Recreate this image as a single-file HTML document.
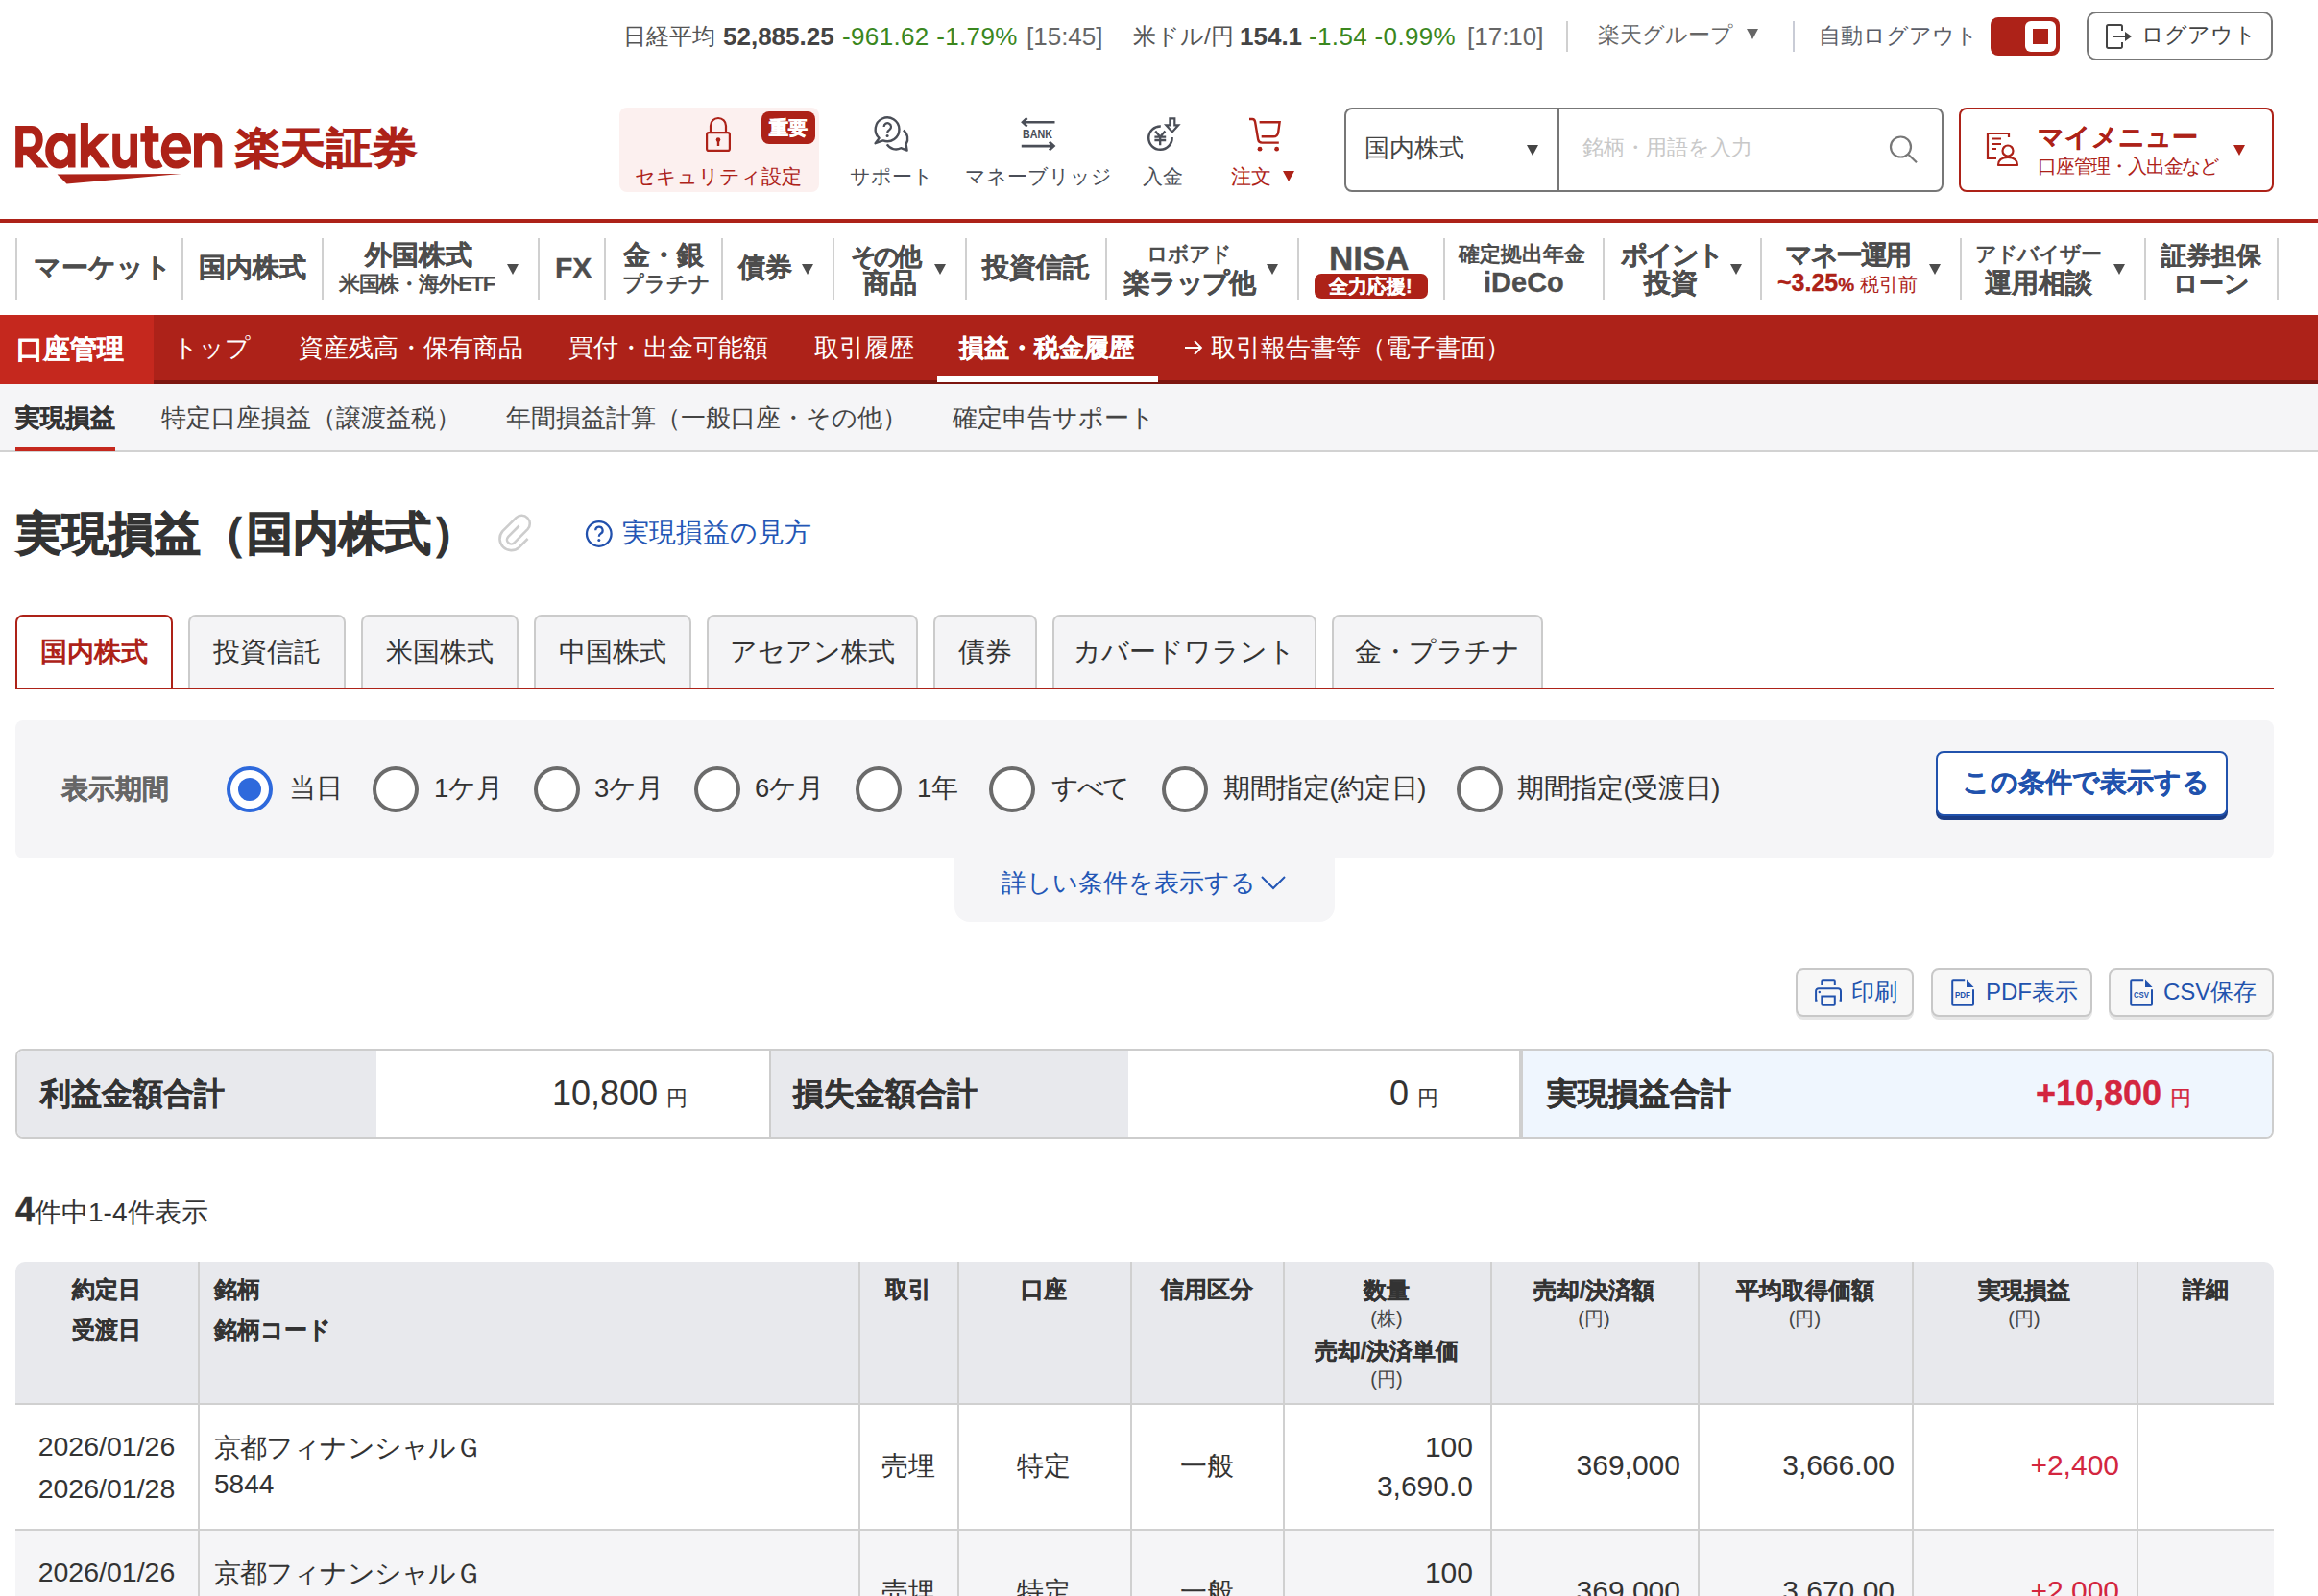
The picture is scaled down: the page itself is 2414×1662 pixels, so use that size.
<!DOCTYPE html>
<html lang="ja">
<head>
<meta charset="utf-8">
<style>
*{box-sizing:border-box;margin:0;padding:0}
html,body{width:2414px;height:1662px;overflow:hidden;background:#fff}
body{position:relative;font-family:"Liberation Sans",sans-serif;color:#333}
.a{position:absolute;white-space:nowrap}
.b{font-weight:bold}
svg{position:absolute;overflow:visible}
/* top bar */
.tb{font-size:26px;line-height:26px;color:#555}
.tb.v{font-weight:bold;color:#444}
.tb.g{color:#3a871e;letter-spacing:0.35px}
.tb.j{font-size:24px;line-height:24px}
.vsep{position:absolute;width:2px;background:#d0d0d0}
/* header */
.hlab{font-size:21px;line-height:22px;color:#4a4e57}
/* nav */
.nv{font-weight:bold;color:#4d4d4d;text-align:center}
.nsep{position:absolute;top:248px;height:64px;width:2px;background:#d0d0d0}
.tri{position:absolute;width:0;height:0;border-left:6px solid transparent;border-right:6px solid transparent;border-top:11px solid #4d4d4d}

.acc{top:348px;font-size:26px;line-height:28px;color:#fff}
.sub{top:421px;font-size:26px;line-height:28px;color:#444}
.tab{top:640px;height:76px;border:2px solid #cbcbcb;border-bottom:none;border-radius:8px 8px 0 0;background:#f4f4f6;font-size:28px;line-height:74px;text-align:center;color:#333}
.tab.act{border-color:#ad2218;background:#fff;color:#ad2218;font-weight:bold}

.rad{position:absolute;top:798px;width:48px;height:48px;border-radius:50%;border:4px solid #6b6b6b;background:#fff}
.rad.on{border-color:#2e69dc}
.rad.on::after{content:"";position:absolute;left:8px;top:8px;width:24px;height:24px;border-radius:50%;background:#2e69dc}
.rl{top:807px;font-size:27.5px;line-height:28px;color:#333}
.btn{top:1008px;height:51px;border:2px solid #c8c8c8;border-radius:8px;background:#f7f7f7;box-shadow:0 3px 0 #e6e6e6}
.bt{top:1020px;font-size:24px;line-height:26px;color:#2152ad}
.sl{top:1123px;font-size:32px;line-height:32px;color:#333}
.sv{top:1121px;font-size:36px;line-height:36px;color:#333}
.yen{font-size:22px;margin-left:9px}

.th{font-size:24px;line-height:34px;font-weight:bold;color:#333}
.un{font-size:20px;line-height:26px;color:#444}
.td{font-size:28px;line-height:34px;color:#333}
.dt{font-size:28.5px}
.num{font-size:30px}

.b,.nv,.th,b{-webkit-text-stroke:0.35px currentColor}
.ttl{-webkit-text-stroke:1.2px currentColor}
</style>
</head>
<body>

<!-- ================= TOP BAR ================= -->
<div class="a tb j" style="left:649px;top:26px">日経平均</div>
<div class="a tb v" style="left:753px;top:25px">52,885.25</div>
<div class="a tb g" style="left:877px;top:25px">-961.62 -1.79%</div>
<div class="a tb" style="left:1069px;top:25px;color:#666">[15:45]</div>
<div class="a tb j" style="left:1180px;top:26px">米ドル/円</div>
<div class="a tb v" style="left:1291px;top:25px">154.1</div>
<div class="a tb g" style="left:1363px;top:25px">-1.54 -0.99%</div>
<div class="a tb" style="left:1528px;top:25px;color:#666">[17:10]</div>
<div class="vsep" style="left:1631px;top:22px;height:32px"></div>
<div class="a tb" style="left:1664px;top:25px;font-size:22.5px;line-height:24px;color:#666">楽天グループ</div>
<div class="tri" style="left:1819px;top:30px;border-top-color:#666"></div>
<div class="vsep" style="left:1867px;top:22px;height:32px;background:#c9ccd6"></div>
<div class="a tb" style="left:1894px;top:26px;font-size:22.5px;line-height:24px;color:#5a5d68">自動ログアウト</div>
<div class="a" style="left:2073px;top:18px;width:72px;height:40px;border-radius:8px;background:#ad2218"></div>
<div class="a" style="left:2109px;top:22px;width:32px;height:32px;border-radius:6px;background:#fff"></div>
<div class="a" style="left:2117px;top:30px;width:16px;height:16px;background:#ad2218"></div>
<div class="a" style="left:2173px;top:12px;width:194px;height:51px;border:2px solid #777;border-radius:10px"></div>
<svg style="left:2193px;top:25px" width="28" height="26" viewBox="0 0 28 26"><path d="M17 7V2.5a1.5 1.5 0 0 0-1.5-1.5H2.5A1.5 1.5 0 0 0 1 2.5v21A1.5 1.5 0 0 0 2.5 25h13a1.5 1.5 0 0 0 1.5-1.5V19" fill="none" stroke="#444" stroke-width="2"/><path d="M8 13h13" stroke="#444" stroke-width="2"/><path d="M20 8l7 5-7 5z" fill="#444"/></svg>
<div class="a tb" style="left:2230px;top:25px;font-size:22.5px;line-height:24px;color:#444">ログアウト</div>

<!-- ================= HEADER ================= -->
<!-- logo -->
<svg style="left:0;top:100px" width="460" height="110" viewBox="0 100 460 110">
  <g fill="#ad2218" fill-rule="evenodd">
    <path d="M16.15 130.9H33C40 130.9 44.7 136.5 44.7 145.5C44.7 152 41.8 157 37.5 159.5L50.7 174.6H38.8L27.6 161.2H24.1V174.6H16.15ZM24.1 139.3H31.8C35 139.3 36.8 141.8 36.8 146C36.8 150.2 35 152.7 31.8 152.7H24.1Z"/>
    <path d="M78.5 139.8V174.6H71V171.5C68.8 174 66 175.6 62 175.6C53 175.6 47.2 167.5 47.2 157C47.2 146.5 53 138.4 62 138.4C66 138.4 68.8 140 71 142.5V139.8ZM63.3 146.8A7.7 10.2 0 1 0 63.3 167.2A7.7 10.2 0 1 0 63.3 146.8Z"/>
    <path d="M83.9 127.9H91.9V174.6H83.9ZM91.9 150.5L103 139.8H113.5L99.5 153.5L115 174.6H104.5L94.5 161L91.9 163.5Z"/>
    <path d="M117.2 139.8H125.1V160C125.1 164.5 127.3 167.1 130.3 167.1C133.3 167.1 135.5 164.5 135.5 160V139.8H143V174.6H135.5V172C133.5 174.5 131 175.6 128.5 175.6C121.5 175.6 117.2 170 117.2 162Z"/>
    <path d="M150.9 130.9H158.8V139.3H165.3V147.8H158.8V163.5C158.8 166.5 160.3 167.5 163 167.5L166 166.8L169.5 173.2C167 175 164.5 175.6 161.5 175.6C154.5 175.6 150.9 171.5 150.9 164.5V147.8H146.4V139.3H150.9Z"/>
    <path d="M199 159.7H175.9C177 164.5 180 167.3 183.5 167.3C186.5 167.3 189.5 165.8 191.6 163.8L198 168.6C194.8 173 189.5 175.6 183.5 175.6C174.5 175.6 167.8 167.8 167.8 157C167.8 146.2 174.5 138.4 183.5 138.4C192.5 138.4 199 146 199 156.5ZM175.8 153.2H190.6C189.8 149 187 146.3 183.2 146.3C179.4 146.3 176.6 149 175.8 153.2Z"/>
    <path d="M202 139.3H210V142.5C212 140 215 138.4 218.5 138.4C226 138.4 231.3 143.5 231.3 151.5V174.6H223.3V153C223.3 149 221 146.8 217.5 146.8C213 146.8 210 149.5 210 154V174.6H202Z"/>
  </g>
  <path d="M59.6 181.5L188.6 181L69.5 191.4Z" fill="#ad2218"/>
  <text x="245" y="169" font-size="44" fill="#ad2218" stroke="#ad2218" stroke-width="2.5" stroke-linejoin="miter" textLength="189" lengthAdjust="spacingAndGlyphs">楽天証券</text>
</svg>

<!-- security -->
<div class="a" style="left:645px;top:112px;width:208px;height:88px;border-radius:8px;background:#fcf0ef"></div>
<svg style="left:735px;top:122px" width="26" height="36" viewBox="0 0 26 36"><path d="M5 15V9a8 8 0 0 1 16 0v6" fill="none" stroke="#ad2218" stroke-width="2.2"/><rect x="1.1" y="16.1" width="23.8" height="18.8" rx="2" fill="none" stroke="#ad2218" stroke-width="2.2"/><circle cx="13" cy="23.5" r="2.3" fill="#ad2218"/><rect x="11.8" y="24" width="2.4" height="6" fill="#ad2218"/></svg>
<div class="a" style="left:793px;top:116px;width:56px;height:34px;border-radius:8px;background:#ad2218"></div>
<div class="a b" style="left:801px;top:123px;font-size:20px;line-height:20px;color:#fff;-webkit-text-stroke:0.6px #fff">重要</div>
<div class="a hlab" style="left:661px;top:173px;color:#ad2218">セキュリティ設定</div>

<!-- support -->
<svg style="left:900px;top:115px" width="60" height="50" viewBox="900 115 60 50"><path d="M915.6 143.9L911.6 149.2L919.6 146.4A12.4 12.4 0 1 0 915.6 143.9Z" fill="none" stroke="#4a4e57" stroke-width="2.4" stroke-linejoin="round"/><path d="M940.8 135.6A11 11 0 0 1 943.6 150.2L944.6 156.6L938.2 154.2A11 11 0 0 1 923.8 150.4" fill="none" stroke="#4a4e57" stroke-width="2.4" stroke-linejoin="round"/><path d="M920.6 132a3.7 3.7 0 1 1 5.8 3c-1.6 1-2.3 1.8-2.3 3.4" fill="none" stroke="#4a4e57" stroke-width="2.2"/><circle cx="924.1" cy="141.6" r="1.5" fill="#4a4e57"/></svg>
<div class="a hlab" style="left:885px;top:173px">サポート</div>

<!-- money bridge -->
<svg style="left:1055px;top:115px" width="50" height="50" viewBox="1055 115 50 50"><path d="M1098.5 127.3H1065M1069.6 123L1065 127.3L1069.6 131.6" fill="none" stroke="#4a4e57" stroke-width="2.6"/><path d="M1063.8 152.1H1097.5M1092.8 147.8L1097.5 152.1L1092.8 156.4" fill="none" stroke="#4a4e57" stroke-width="2.6"/><text x="1080.5" y="144.4" text-anchor="middle" font-family="Liberation Sans" font-weight="bold" font-size="12" textLength="31" lengthAdjust="spacingAndGlyphs" fill="#4a4e57">BANK</text></svg>
<div class="a hlab" style="left:1005px;top:173px">マネーブリッジ</div>

<!-- deposit -->
<svg style="left:1185px;top:112px" width="50" height="50" viewBox="1185 112 50 50"><path d="M1208.8 131.4A12.2 12.2 0 1 0 1220.6 143" fill="none" stroke="#4a4e57" stroke-width="2.5"/><path d="M1203.2 136.4L1208.2 142.4L1213.4 136.4M1208.2 142V151.2M1202.4 142.6H1214.2M1202.4 146H1214.2" fill="none" stroke="#4a4e57" stroke-width="2.3"/><path d="M1218.4 123.4H1223.3V130.3H1227.2L1220.8 137.4L1214.4 130.3H1218.4Z" fill="none" stroke="#4a4e57" stroke-width="2.2"/></svg>
<div class="a hlab" style="left:1190px;top:173px">入金</div>

<!-- order -->
<svg style="left:1295px;top:112px" width="50" height="50" viewBox="1295 112 50 50"><path d="M1301 124H1304.2Q1306.6 124 1307.1 127L1310.2 145.2Q1310.8 148.6 1314.2 148.6H1331.8" fill="none" stroke="#ad2218" stroke-width="2.4"/><path d="M1311.6 127.3H1332.6L1331.2 137.6Q1330.6 142.3 1326 142.3H1313.7" fill="none" stroke="#ad2218" stroke-width="2.4"/><circle cx="1312" cy="155.2" r="2.4" fill="#ad2218"/><circle cx="1329.6" cy="155.2" r="2.4" fill="#ad2218"/></svg>
<div class="a hlab" style="left:1282px;top:173px;color:#ad2218">注文</div>
<div class="tri" style="left:1336px;top:178px;border-top-color:#ad2218"></div>

<!-- search -->
<div class="a" style="left:1400px;top:112px;width:624px;height:88px;border:2px solid #777;border-radius:8px"></div>
<div class="a" style="left:1622px;top:113px;width:2px;height:86px;background:#777"></div>
<div class="a" style="left:1421px;top:141px;font-size:26px;line-height:26px;color:#444">国内株式</div>
<div class="tri" style="left:1590px;top:151px;border-top-color:#444"></div>
<div class="a" style="left:1648px;top:141px;font-size:22px;line-height:26px;color:#c8c8c8">銘柄・用語を入力</div>
<svg style="left:1967px;top:141px" width="32" height="30" viewBox="0 0 32 30"><circle cx="12.5" cy="12" r="10.5" fill="none" stroke="#777" stroke-width="2.2"/><path d="M20.5 20l8.5 8.3" stroke="#777" stroke-width="2.2"/></svg>

<!-- mymenu -->
<div class="a" style="left:2040px;top:112px;width:328px;height:88px;border:2px solid #ad2218;border-radius:8px"></div>
<svg style="left:2068px;top:138px" width="36" height="36" viewBox="0 0 36 36"><path d="M11 27H2V1h22v4" fill="none" stroke="#ad2218" stroke-width="2.2"/><path d="M6 6.5h10M6 12h10M6 17h5" stroke="#ad2218" stroke-width="2.2"/><circle cx="23" cy="19" r="5.5" fill="none" stroke="#ad2218" stroke-width="2.2"/><path d="M13 34c0-5 3.5-8 10-8s10 3 10 8z" fill="none" stroke="#ad2218" stroke-width="2.2" stroke-linejoin="round"/></svg>
<div class="a b" style="left:2122px;top:129px;font-size:26.5px;line-height:28px;color:#ad2218">マイメニュー</div>
<div class="a" style="left:2122px;top:163px;font-size:20px;line-height:20px;letter-spacing:-1.2px;color:#ad2218">口座管理・入出金など</div>
<div class="tri" style="left:2326px;top:151px;border-top-color:#ad2218"></div>

<!-- red line -->
<div class="a" style="left:0;top:228px;width:2414px;height:4px;background:#ad2218"></div>

<!-- ================= NAV ================= -->
<div class="nsep" style="left:16px"></div>
<div class="nsep" style="left:189px"></div>
<div class="nsep" style="left:335px"></div>
<div class="nsep" style="left:560px"></div>
<div class="nsep" style="left:629px"></div>
<div class="nsep" style="left:751px"></div>
<div class="nsep" style="left:867px"></div>
<div class="nsep" style="left:1005px"></div>
<div class="nsep" style="left:1151px"></div>
<div class="nsep" style="left:1351px"></div>
<div class="nsep" style="left:1503px"></div>
<div class="nsep" style="left:1669px"></div>
<div class="nsep" style="left:1833px"></div>
<div class="nsep" style="left:2041px"></div>
<div class="nsep" style="left:2233px"></div>
<div class="nsep" style="left:2371px"></div>

<div class="a nv" style="left:35px;top:265px;font-size:28px;line-height:28px">マーケット</div>
<div class="a nv" style="left:207px;top:265px;font-size:28px;line-height:28px">国内株式</div>
<div class="a nv" style="left:380px;top:252px;font-size:28px;line-height:28px">外国株式</div>
<div class="a nv" style="left:353px;top:285px;font-size:22px;line-height:22px;letter-spacing:-1.3px;-webkit-text-stroke:0">米国株・海外ETF</div>
<div class="tri" style="left:528px;top:275px"></div>
<div class="a nv" style="left:578px;top:264px;font-size:30px;line-height:30px">FX</div>
<div class="a nv" style="left:649px;top:252px;font-size:28px;line-height:28px">金・銀</div>
<div class="a nv" style="left:648px;top:285px;font-size:22px;line-height:22px;-webkit-text-stroke:0">プラチナ</div>
<div class="a nv" style="left:769px;top:265px;font-size:28px;line-height:28px">債券</div>
<div class="tri" style="left:835px;top:275px"></div>
<div class="a nv" style="left:886px;top:253px;font-size:26px;line-height:28px;letter-spacing:-3px">その他</div>
<div class="a nv" style="left:899px;top:281px;font-size:28px;line-height:28px">商品</div>
<div class="tri" style="left:973px;top:275px"></div>
<div class="a nv" style="left:1023px;top:265px;font-size:28px;line-height:28px">投資信託</div>
<div class="a nv" style="left:1194px;top:254px;font-size:22px;line-height:22px;letter-spacing:-1px;-webkit-text-stroke:0">ロボアド</div>
<div class="a nv" style="left:1170px;top:281px;font-size:28px;line-height:28px;letter-spacing:-1.2px">楽ラップ他</div>
<div class="tri" style="left:1319px;top:275px"></div>
<div class="a nv" style="left:1384px;top:251px;font-size:35px;line-height:35px">NISA</div>
<div class="a" style="left:1369px;top:285px;width:118px;height:26px;border-radius:7px;background:#ad2218"></div>
<div class="a b" style="left:1384px;top:287px;font-size:20px;line-height:22px;color:#fff">全力応援!</div>
<div class="a nv" style="left:1519px;top:254px;font-size:22px;line-height:22px;-webkit-text-stroke:0">確定拠出年金</div>
<div class="a nv" style="left:1545px;top:280px;font-size:29px;line-height:29px">iDeCo</div>
<div class="a nv" style="left:1688px;top:252px;font-size:28px;line-height:28px;letter-spacing:-2.7px">ポイント</div>
<div class="a nv" style="left:1712px;top:281px;font-size:28px;line-height:28px">投資</div>
<div class="tri" style="left:1802px;top:275px"></div>
<div class="a nv" style="left:1859px;top:252px;font-size:28px;line-height:28px;letter-spacing:-2.5px">マネー運用</div>
<div class="a" style="left:1851px;top:283px;font-size:20px;line-height:22px;color:#ad2218"><b style="font-size:25px">~3.25</b><b style="font-size:19px">%</b> 税引前</div>
<div class="tri" style="left:2009px;top:275px"></div>
<div class="a nv" style="left:2057px;top:254px;font-size:22px;line-height:22px;letter-spacing:-1px;-webkit-text-stroke:0">アドバイザー</div>
<div class="a nv" style="left:2067px;top:281px;font-size:28px;line-height:28px">運用相談</div>
<div class="tri" style="left:2201px;top:275px"></div>
<div class="a nv" style="left:2251px;top:252px;font-size:26px;line-height:28px">証券担保</div>
<div class="a nv" style="left:2263px;top:281px;font-size:26px;line-height:28px">ローン</div>


<!-- ================= ACCOUNT BAR ================= -->
<div class="a" style="left:0;top:328px;width:2414px;height:72px;background:#ad2219;border-bottom:4px solid #7d1610"></div>
<div class="a" style="left:0;top:328px;width:160px;height:72px;background:#c5281e"></div>
<div class="a b" style="left:17px;top:350px;font-size:28px;line-height:28px;color:#fff">口座管理</div>
<div class="a acc" style="left:180px">トップ</div>
<div class="a acc" style="left:311px">資産残高・保有商品</div>
<div class="a acc" style="left:592px">買付・出金可能額</div>
<div class="a acc" style="left:848px">取引履歴</div>
<div class="a acc b" style="left:999px">損益・税金履歴</div>
<div class="a" style="left:976px;top:392px;width:230px;height:6px;background:#fff"></div>
<svg style="left:1233px;top:352px" width="20" height="20" viewBox="0 0 20 20"><path d="M1 10h17M11 3l7 7-7 7" fill="none" stroke="#fff" stroke-width="1.8"/></svg>
<div class="a acc" style="left:1261px">取引報告書等（電子書面）</div>

<!-- ================= SUB NAV ================= -->
<div class="a" style="left:0;top:400px;width:2414px;height:71px;background:#f5f5f7;border-bottom:2px solid #d2d2d2"></div>
<div class="a b sub" style="left:16px;color:#333">実現損益</div>
<div class="a" style="left:16px;top:466px;width:104px;height:4px;background:#c5281e"></div>
<div class="a sub" style="left:168px">特定口座損益（譲渡益税）</div>
<div class="a sub" style="left:527px">年間損益計算（一般口座・その他）</div>
<div class="a sub" style="left:992px">確定申告サポート</div>

<!-- ================= TITLE ================= -->
<div class="a b ttl" style="left:17px;top:532px;font-size:48px;line-height:48px;color:#333">実現損益（国内株式）</div>
<svg style="left:510px;top:530px" width="50" height="50" viewBox="510 530 50 50"><path d="M540.6 547.5L529.3 558.8A4.5 4.5 0 0 0 535.7 565.2L549.5 551.1A8.49 8.49 0 0 0 537.5 539.1L523.4 553.2A12.05 12.05 0 0 0 540.4 570.2L549.6 561" fill="none" stroke="#cdcdcd" stroke-width="2.6"/></svg>
<svg style="left:605px;top:538px" width="40" height="40" viewBox="605 538 40 40"><circle cx="623.8" cy="556" r="12.8" fill="none" stroke="#2251ad" stroke-width="2.3"/><path d="M620.2 552.3A3.7 3.7 0 1 1 625.5 555.7C624.3 556.4 623.8 557.2 623.8 558.8" fill="none" stroke="#2251ad" stroke-width="2.2"/><circle cx="623.8" cy="562.6" r="1.5" fill="#2251ad"/></svg>
<div class="a" style="left:648px;top:541px;font-size:28px;line-height:28px;color:#2356b5">実現損益の見方</div>

<!-- ================= TABS ================= -->
<div class="a tab act" style="left:16px;width:164px">国内株式</div>
<div class="a tab" style="left:196px;width:164px">投資信託</div>
<div class="a tab" style="left:376px;width:164px">米国株式</div>
<div class="a tab" style="left:556px;width:164px">中国株式</div>
<div class="a tab" style="left:736px;width:220px">アセアン株式</div>
<div class="a tab" style="left:972px;width:108px">債券</div>
<div class="a tab" style="left:1096px;width:275px">カバードワラント</div>
<div class="a tab" style="left:1387px;width:220px">金・プラチナ</div>
<div class="a" style="left:16px;top:716px;width:2352px;height:2px;background:#ad2218"></div>


<!-- ================= FILTER ================= -->
<div class="a" style="left:16px;top:750px;width:2352px;height:144px;border-radius:8px;background:#f5f5f7"></div>
<div class="a b" style="left:64px;top:808px;font-size:28px;line-height:28px;color:#666">表示期間</div>
<div class="rad on" style="left:236px"></div>
<div class="a rl" style="left:301px">当日</div>
<div class="rad" style="left:388px"></div>
<div class="a rl" style="left:452px">1ケ月</div>
<div class="rad" style="left:556px"></div>
<div class="a rl" style="left:619px">3ケ月</div>
<div class="rad" style="left:723px"></div>
<div class="a rl" style="left:786px">6ケ月</div>
<div class="rad" style="left:891px"></div>
<div class="a rl" style="left:955px">1年</div>
<div class="rad" style="left:1030px"></div>
<div class="a rl" style="left:1095px;letter-spacing:-2.5px">すべて</div>
<div class="rad" style="left:1210px"></div>
<div class="a rl" style="left:1274px;letter-spacing:-0.35px">期間指定(約定日)</div>
<div class="rad" style="left:1517px"></div>
<div class="a rl" style="left:1580px;letter-spacing:-0.35px">期間指定(受渡日)</div>
<div class="a" style="left:2016px;top:782px;width:304px;height:68px;border:2px solid #2152ad;border-radius:8px;background:#fff;box-shadow:0 4px 0 #1a3c87"></div>
<div class="a b" style="left:2044px;top:801px;font-size:28px;line-height:28px;color:#2152ad">この条件で表示する</div>
<div class="a" style="left:994px;top:893px;width:396px;height:67px;border-radius:0 0 16px 16px;background:#f5f5f7"></div>
<div class="a" style="left:1043px;top:905px;font-size:26px;line-height:28px;color:#2356b5">詳しい条件を表示する</div>
<svg style="left:1313px;top:912px" width="26" height="15" viewBox="0 0 26 15"><path d="M1 1l12 12L25 1" fill="none" stroke="#2356b5" stroke-width="2"/></svg>

<!-- ================= BUTTONS ================= -->
<div class="a btn" style="left:1870px;width:123px"></div>
<svg style="left:1885px;top:1015px" width="40" height="40" viewBox="1885 1015 40 40"><path d="M1897.3 1026V1022.2a1 1 0 0 1 1-1H1909.8a1 1 0 0 1 1 1V1026" fill="none" stroke="#2152ad" stroke-width="2"/><path d="M1892.5 1041.7H1891.1V1032a2.8 2.8 0 0 1 2.8-2.8H1914.2a2.8 2.8 0 0 1 2.8 2.8V1041.7H1915.6" fill="none" stroke="#2152ad" stroke-width="2"/><path d="M1897.3 1037.5H1910.8V1045.7a1 1 0 0 1-1 1H1898.3a1 1 0 0 1-1-1Z" fill="none" stroke="#2152ad" stroke-width="2"/><circle cx="1894.8" cy="1033" r="1.2" fill="#2152ad"/></svg>
<div class="a bt" style="left:1928px">印刷</div>
<div class="a btn" style="left:2011px;width:168px"></div>
<svg style="left:2028px;top:1015px" width="32" height="36" viewBox="2028 1015 32 36"><path d="M2046.2 1021.2H2034.2a1 1 0 0 0-1 1V1045.7a1 1 0 0 0 1 1H2054a1 1 0 0 0 1-1V1030.3" fill="none" stroke="#2152ad" stroke-width="2"/><path d="M2048 1020.4V1027.9H2055.6Z" fill="#2152ad"/><text x="2044" y="1038.8" text-anchor="middle" font-family="Liberation Sans" font-weight="bold" font-size="8.6" textLength="16" lengthAdjust="spacingAndGlyphs" fill="#2152ad">PDF</text></svg>
<div class="a bt" style="left:2068px">PDF表示</div>
<div class="a btn" style="left:2196px;width:172px"></div>
<svg style="left:2214px;top:1015px" width="32" height="36" viewBox="2028 1015 32 36"><path d="M2046.2 1021.2H2034.2a1 1 0 0 0-1 1V1045.7a1 1 0 0 0 1 1H2054a1 1 0 0 0 1-1V1030.3" fill="none" stroke="#2152ad" stroke-width="2"/><path d="M2048 1020.4V1027.9H2055.6Z" fill="#2152ad"/><text x="2044" y="1038.8" text-anchor="middle" font-family="Liberation Sans" font-weight="bold" font-size="8.6" textLength="16" lengthAdjust="spacingAndGlyphs" fill="#2152ad">CSV</text></svg>
<div class="a bt" style="left:2253px">CSV保存</div>

<!-- ================= SUMMARY ================= -->
<div class="a" style="left:16px;top:1092px;width:2352px;height:94px;border:2px solid #cdcdcd;border-radius:8px;overflow:hidden;background:#fff">
  <div class="a" style="left:0;top:0;width:374px;height:90px;background:#e8e9ed"></div>
  <div class="a" style="left:783px;top:0;width:2px;height:90px;background:#cdcdcd"></div>
  <div class="a" style="left:785px;top:0;width:372px;height:90px;background:#e8e9ed"></div>
  <div class="a" style="left:1564px;top:0;width:4px;height:90px;background:#cfcfcf"></div>
  <div class="a" style="left:1568px;top:0;width:800px;height:90px;background:#eff6fe"></div>
</div>
<div class="a b sl" style="left:42px">利益金額合計</div>
<div class="a sv" style="left:575px">10,800<span class="yen">円</span></div>
<div class="a b sl" style="left:826px">損失金額合計</div>
<div class="a sv" style="left:1447px">0<span class="yen">円</span></div>
<div class="a b sl" style="left:1611px">実現損益合計</div>
<div class="a sv b" style="left:2120px;color:#d3263f">+10,800<span class="yen" style="font-weight:normal;color:#d3263f">円</span></div>

<div class="a" style="left:16px;top:1243px;font-size:28px;line-height:34px;color:#333"><b style="font-size:36px">4</b>件中1-4件表示</div>


<!-- ================= TABLE ================= -->
<div class="a" style="left:16px;top:1314px;width:2352px;height:148px;background:#e8e9ed;border-radius:10px 10px 0 0"></div>
<div class="a" style="left:16px;top:1463px;width:2352px;height:129px;background:#fff"></div>
<div class="a" style="left:16px;top:1594px;width:2352px;height:100px;background:#f5f5f7"></div>
<div class="a" style="left:16px;top:1461px;width:2352px;height:2px;background:#d0d0d0"></div>
<div class="a" style="left:16px;top:1592px;width:2352px;height:2px;background:#d0d0d0"></div>
<div class="a" style="left:206px;top:1314px;width:2px;height:400px;background:#d0d0d0"></div>
<div class="a" style="left:894px;top:1314px;width:2px;height:400px;background:#d0d0d0"></div>
<div class="a" style="left:997px;top:1314px;width:2px;height:400px;background:#d0d0d0"></div>
<div class="a" style="left:1177px;top:1314px;width:2px;height:400px;background:#d0d0d0"></div>
<div class="a" style="left:1336px;top:1314px;width:2px;height:400px;background:#d0d0d0"></div>
<div class="a" style="left:1552px;top:1314px;width:2px;height:400px;background:#d0d0d0"></div>
<div class="a" style="left:1768px;top:1314px;width:2px;height:400px;background:#d0d0d0"></div>
<div class="a" style="left:1991px;top:1314px;width:2px;height:400px;background:#d0d0d0"></div>
<div class="a" style="left:2225px;top:1314px;width:2px;height:400px;background:#d0d0d0"></div>
<div class="a th" style="left:16px;top:1326px;width:190px;text-align:center">約定日</div>
<div class="a th" style="left:16px;top:1368px;width:190px;text-align:center">受渡日</div>
<div class="a th" style="left:223px;top:1326px">銘柄</div>
<div class="a th" style="left:223px;top:1368px">銘柄コード</div>
<div class="a th" style="left:894px;top:1326px;width:103px;text-align:center">取引</div>
<div class="a th" style="left:997px;top:1326px;width:180px;text-align:center">口座</div>
<div class="a th" style="left:1177px;top:1326px;width:159px;text-align:center">信用区分</div>
<div class="a th" style="left:2225px;top:1326px;width:143px;text-align:center">詳細</div>
<div class="a th" style="left:1336px;top:1327px;width:216px;text-align:center">数量</div>
<div class="a un" style="left:1336px;top:1360px;width:216px;text-align:center">(株)</div>
<div class="a th" style="left:1336px;top:1390px;width:216px;text-align:center">売却/決済単価</div>
<div class="a un" style="left:1336px;top:1423px;width:216px;text-align:center">(円)</div>
<div class="a th" style="left:1552px;top:1327px;width:216px;text-align:center">売却/決済額</div>
<div class="a un" style="left:1552px;top:1360px;width:216px;text-align:center">(円)</div>
<div class="a th" style="left:1768px;top:1327px;width:223px;text-align:center">平均取得価額</div>
<div class="a un" style="left:1768px;top:1360px;width:223px;text-align:center">(円)</div>
<div class="a th" style="left:1991px;top:1327px;width:234px;text-align:center">実現損益</div>
<div class="a un" style="left:1991px;top:1360px;width:234px;text-align:center">(円)</div>
<div class="a td dt" style="left:16px;top:1489px;width:190px;text-align:center">2026/01/26</div>
<div class="a td dt" style="left:16px;top:1533px;width:190px;text-align:center">2026/01/28</div>
<div class="a td" style="left:223px;top:1491px;letter-spacing:-0.9px">京都フィナンシャルＧ</div>
<div class="a td" style="left:223px;top:1529px">5844</div>
<div class="a td" style="left:894px;top:1510px;width:103px;text-align:center">売埋</div>
<div class="a td" style="left:997px;top:1510px;width:180px;text-align:center">特定</div>
<div class="a td" style="left:1177px;top:1510px;width:159px;text-align:center">一般</div>
<div class="a td num" style="left:1336px;top:1490px;width:198px;text-align:right">100</div>
<div class="a td num" style="left:1336px;top:1531px;width:198px;text-align:right">3,690.0</div>
<div class="a td num" style="left:1552px;top:1509px;width:198px;text-align:right">369,000</div>
<div class="a td num" style="left:1768px;top:1509px;width:205px;text-align:right">3,666.00</div>
<div class="a td num" style="left:1991px;top:1509px;width:216px;text-align:right"><span style="color:#d3263f">+2,400</span></div>
<div class="a td dt" style="left:16px;top:1620px;width:190px;text-align:center">2026/01/26</div>
<div class="a td dt" style="left:16px;top:1664px;width:190px;text-align:center">2026/01/28</div>
<div class="a td" style="left:223px;top:1622px;letter-spacing:-0.9px">京都フィナンシャルＧ</div>
<div class="a td" style="left:223px;top:1660px">5844</div>
<div class="a td" style="left:894px;top:1641px;width:103px;text-align:center">売埋</div>
<div class="a td" style="left:997px;top:1641px;width:180px;text-align:center">特定</div>
<div class="a td" style="left:1177px;top:1641px;width:159px;text-align:center">一般</div>
<div class="a td num" style="left:1336px;top:1621px;width:198px;text-align:right">100</div>
<div class="a td num" style="left:1336px;top:1662px;width:198px;text-align:right">3,666.0</div>
<div class="a td num" style="left:1552px;top:1640px;width:198px;text-align:right">369,000</div>
<div class="a td num" style="left:1768px;top:1640px;width:205px;text-align:right">3,670.00</div>
<div class="a td num" style="left:1991px;top:1640px;width:216px;text-align:right"><span style="color:#d3263f">+2,000</span></div>

</body>
</html>
